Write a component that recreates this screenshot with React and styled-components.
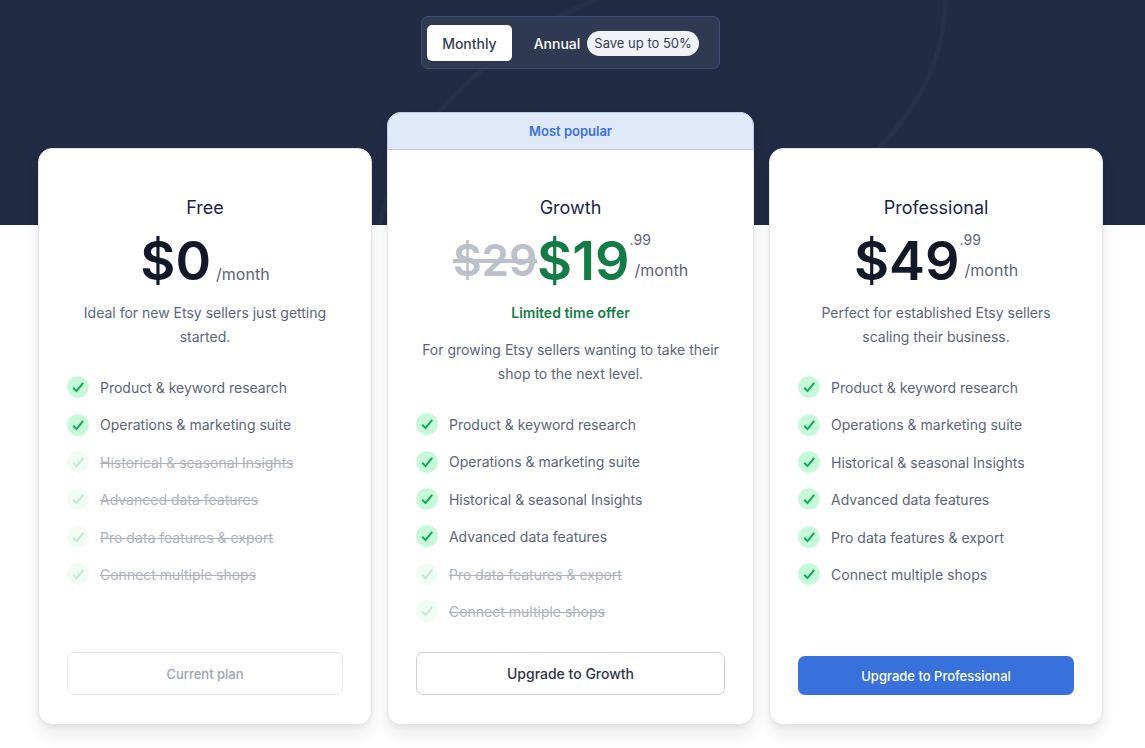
import React from "react";
import styled, { createGlobalStyle } from "styled-components";

const features = [
  "Product & keyword research",
  "Operations & marketing suite",
  "Historical & seasonal Insights",
  "Advanced data features",
  "Pro data features & export",
  "Connect multiple shops",
];

const plans = [
  {
    name: "Free",
    price: "$0",
    text: "Ideal for new Etsy sellers just getting started.",
    included: 2,
    button: "Current plan",
    variant: "muted",
  },
  {
    name: "Growth",
    oldPrice: "$29",
    price: "$19",
    cents: ".99",
    offer: "Limited time offer",
    text: "For growing Etsy sellers wanting to take their shop to the next level.",
    included: 4,
    button: "Upgrade to Growth",
    variant: "outline",
    popular: true,
  },
  {
    name: "Professional",
    price: "$49",
    cents: ".99",
    text: "Perfect for established Etsy sellers scaling their business.",
    included: 6,
    button: "Upgrade to Professional",
    variant: "primary",
  },
];

function CheckIcon() {
  return (
    <svg width="22" height="22" viewBox="0 1 22 22" aria-hidden="true">
      <circle cx="11" cy="11" r="10.8" fill="#c6f9d8" />
      <path
        d="M6.2 11.7l3.3 3.4L16.2 6.9"
        fill="none"
        stroke="#10a957"
        strokeWidth="2"
      />
    </svg>
  );
}

function PlanCard({ plan }) {
  return (
    <Card $popular={plan.popular}>
      {plan.popular && <Banner>Most popular</Banner>}
      <Body>
        <h2>{plan.name}</h2>
        <Price>
          {plan.oldPrice && <OldPrice>{plan.oldPrice}</OldPrice>}
          <Amount $sale={plan.oldPrice}>{plan.price}</Amount>
          <Period>
            {plan.cents && <Cents>{plan.cents}</Cents>}
            <Month $raised={plan.cents}>/month</Month>
          </Period>
        </Price>
        {plan.offer && <Offer>{plan.offer}</Offer>}
        <Description>{plan.text}</Description>
        <List>
          {features.map((feature, i) => (
            <Feature key={feature} $off={i >= plan.included}>
              <CheckIcon />
              <span>{feature}</span>
            </Feature>
          ))}
        </List>
        <PlanButton
          type="button"
          $variant={plan.variant}
          disabled={plan.variant === "muted"}
        >
          {plan.button}
        </PlanButton>
      </Body>
    </Card>
  );
}

function App() {
  return (
    <>
      <GlobalStyle />
      <Hero>
        <Rings
          viewBox="0 0 1145 225"
          preserveAspectRatio="xMidYMin slice"
          aria-hidden="true"
        >
          <path d="M600 -2C520 28 398 120 380 225" />
          <path d="M945 -4C946 55 922 102 876 152" />
        </Rings>
        <Toggle>
          <ToggleButton type="button" $active aria-pressed="true">
            Monthly
          </ToggleButton>
          <ToggleButton type="button" aria-pressed="false">
            Annual <Save>Save up to 50%</Save>
          </ToggleButton>
        </Toggle>
      </Hero>
      <Plans>
        {plans.map((plan) => (
          <PlanCard key={plan.name} plan={plan} />
        ))}
      </Plans>
    </>
  );
}

const GlobalStyle = createGlobalStyle`
  * {
    margin: 0;
    padding: 0;
    box-sizing: border-box;
  }
  body {
    background: #fff;
    font-family: Inter, "Liberation Sans", sans-serif;
    color: #5b657b;
  }
  button {
    font-family: inherit;
    cursor: pointer;
  }
`;

const Hero = styled.header`
  position: relative;
  display: flex;
  justify-content: center;
  padding: 16px 4px 156px 0;
  background: #212b43;
`;

const Rings = styled.svg`
  position: absolute;
  inset: 0;
  width: 100%;
  height: 100%;
  path {
    fill: none;
    stroke: #263047;
    stroke-width: 5;
  }
`;

const Toggle = styled.div`
  position: relative;
  display: flex;
  gap: 7px;
  padding: 8px 5px 7px;
  background: #2f3a52;
  border: 1px solid #3a4f78;
  border-radius: 7px;
`;

const ToggleButton = styled.button`
  display: flex;
  align-items: center;
  gap: 7px;
  height: 36px;
  padding: 0 15px;
  border: none;
  border-radius: 5px;
  background: ${(props) => (props.$active ? "#fff" : "transparent")};
  color: ${(props) => (props.$active ? "#333f56" : "#fff")};
  font-size: 14px;
  font-weight: 500;
`;

const Save = styled.span`
  padding: 0 7px;
  border-radius: 13px;
  background: #f1f2f6;
  color: #333f56;
  font-size: 13px;
  font-weight: 400;
  line-height: 25px;
`;

const Plans = styled.main`
  position: relative;
  display: flex;
  align-items: flex-end;
  gap: 15px;
  margin-top: -113px;
  padding: 0 42px 24px 38px;
`;

const Card = styled.section`
  display: flex;
  flex-direction: column;
  flex: ${(props) => (props.$popular ? 11 : 10)} 1 0;
  min-height: ${(props) => (props.$popular ? 613 : 577)}px;
  background: #fff;
  border: 1px solid #e4e6ee;
  border-radius: 14px;
  box-shadow: 0 10px 15px rgba(0, 0, 0, 0.08), 0 3px 5px rgba(0, 0, 0, 0.04);
`;

const Banner = styled.p`
  margin: -1px;
  border: 1px solid #b9ccec;
  border-radius: 14px 14px 0 0;
  background: #e0e9f8;
  color: #3871db;
  font-size: 13px;
  font-weight: 600;
  line-height: 36px;
  text-align: center;
`;

const Body = styled.div`
  display: flex;
  flex-direction: column;
  flex: 1;
  padding: 45px 28px 29px;
  text-align: center;
  h2 {
    color: #1b1f4d;
    font-size: 18px;
    font-weight: 400;
    line-height: 28px;
  }
`;

const Price = styled.div`
  display: flex;
  align-items: center;
  justify-content: center;
  height: 64px;
  margin-top: 6px;
`;

const OldPrice = styled.del`
  color: #bbc0ca;
  font-size: 44px;
  font-weight: 600;
`;

const Amount = styled.span`
  color: ${(props) => (props.$sale ? "#147d46" : "#111827")};
  font-size: 54px;
  font-weight: 600;
`;

const Period = styled.div`
  display: flex;
  flex-direction: column;
  justify-content: flex-end;
  align-self: stretch;
  text-align: left;
`;

const Cents = styled.span`
  font-size: 14px;
  line-height: 20px;
`;

const Month = styled.span`
  margin: ${(props) => (props.$raised ? "10px 0 12px" : "0 0 8px")};
  padding-left: 5px;
  font-size: 16px;
  line-height: 20px;
`;

const Offer = styled.p`
  margin-top: 9px;
  margin-bottom: 4px;
  color: #147d46;
  font-size: 14px;
  font-weight: 600;
  line-height: 24px;
`;

const Description = styled.p`
  margin-top: 9px;
  font-size: 14px;
  line-height: 24px;
`;

const List = styled.ul`
  display: flex;
  flex-direction: column;
  gap: 15px;
  margin: 28px 0 auto;
  list-style: none;
`;

const Feature = styled.li`
  display: flex;
  align-items: center;
  gap: 11px;
  font-size: 14px;
  line-height: 1.6;
  text-align: left;
  opacity: ${(props) => (props.$off ? 0.5 : 1)};
  text-decoration: ${(props) => (props.$off ? "line-through" : "none")};
  svg {
    overflow: visible;
    opacity: ${(props) => (props.$off ? 0.5 : 1)};
  }
`;

const buttonStyles = {
  muted: `
    background: #fff;
    border: 1px solid #e4e6ee;
    color: #9aa5b8;
    font-size: 13px;
  `,
  outline: `
    background: #fff;
    border: 1px solid #c8cedb;
    color: #2c374d;
    font-size: 14px;
  `,
  primary: `
    background: #3871db;
    border: none;
    color: #fff;
    font-size: 13px;
  `,
};

const PlanButton = styled.button`
  height: ${(props) => (props.$variant === "primary" ? 39 : 43)}px;
  border-radius: 7px;
  font-weight: 500;
  ${(props) => buttonStyles[props.$variant]}
`;

export default App;
